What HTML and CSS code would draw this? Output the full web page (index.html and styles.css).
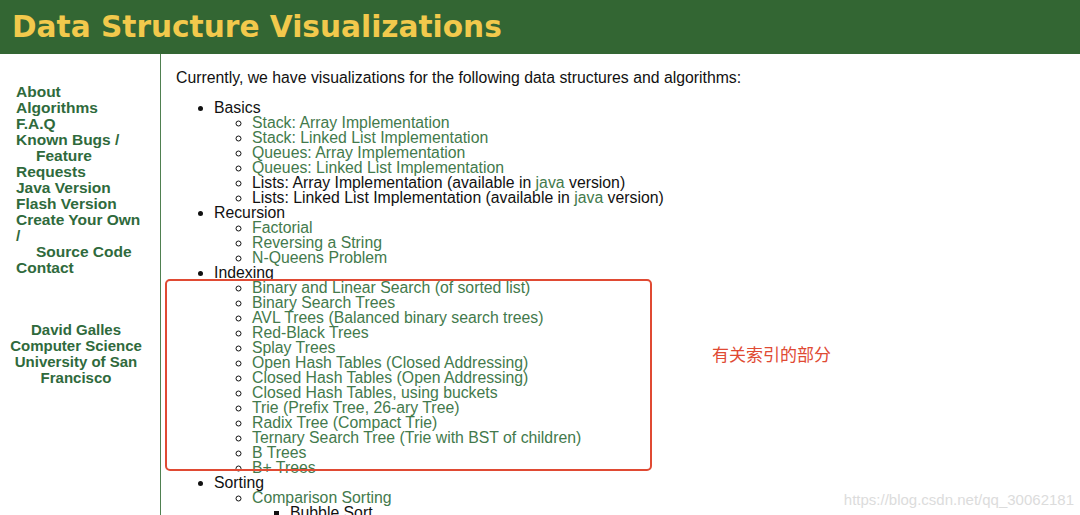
FILE: index.html
```html
<!DOCTYPE html>
<html>
<head>
<meta charset="utf-8">
<title>Data Structure Visualizations</title>
<link rel="stylesheet" href="styles.css">
</head>
<body>
<header class="header">
  <h1 class="title">Data Structure Visualizations</h1>
</header>
<div class="layout">
  <nav class="sidebar">
    <div class="menu">
      <a class="nav-link">About</a>
      <a class="nav-link">Algorithms</a>
      <a class="nav-link">F.A.Q</a>
      <a class="nav-link">Known Bugs /</a>
      <a class="nav-link indent">Feature</a>
      <a class="nav-link">Requests</a>
      <a class="nav-link">Java Version</a>
      <a class="nav-link">Flash Version</a>
      <a class="nav-link">Create Your Own</a>
      <a class="nav-link">/</a>
      <a class="nav-link indent">Source Code</a>
      <a class="nav-link">Contact</a>
    </div>
    <div class="credits">
      <div>David Galles</div>
      <div>Computer Science</div>
      <div>University of San</div>
      <div>Francisco</div>
    </div>
  </nav>
  <main class="main">
    <p class="intro">Currently, we have visualizations for the following data structures and algorithms:</p>
    <ul class="list">
      <li>Basics
        <ul class="sub">
          <li><a class="link">Stack: Array Implementation</a></li>
          <li><a class="link">Stack: Linked List Implementation</a></li>
          <li><a class="link">Queues: Array Implementation</a></li>
          <li><a class="link">Queues: Linked List Implementation</a></li>
          <li>Lists: Array Implementation (available in <a class="link">java</a> version)</li>
          <li>Lists: Linked List Implementation (available in <a class="link">java</a> version)</li>
        </ul>
      </li>
      <li>Recursion
        <ul class="sub">
          <li><a class="link">Factorial</a></li>
          <li><a class="link">Reversing a String</a></li>
          <li><a class="link">N-Queens Problem</a></li>
        </ul>
      </li>
      <li>Indexing
        <ul class="sub">
          <li><a class="link">Binary and Linear Search (of sorted list)</a></li>
          <li><a class="link">Binary Search Trees</a></li>
          <li><a class="link">AVL Trees (Balanced binary search trees)</a></li>
          <li><a class="link">Red-Black Trees</a></li>
          <li><a class="link">Splay Trees</a></li>
          <li><a class="link">Open Hash Tables (Closed Addressing)</a></li>
          <li><a class="link">Closed Hash Tables (Open Addressing)</a></li>
          <li><a class="link">Closed Hash Tables, using buckets</a></li>
          <li><a class="link">Trie (Prefix Tree, 26-ary Tree)</a></li>
          <li><a class="link">Radix Tree (Compact Trie)</a></li>
          <li><a class="link">Ternary Search Tree (Trie with BST of children)</a></li>
          <li><a class="link">B Trees</a></li>
          <li><a class="link">B+ Trees</a></li>
        </ul>
      </li>
      <li>Sorting
        <ul class="sub">
          <li><a class="link">Comparison Sorting</a>
            <ul class="subsub">
              <li>Bubble Sort</li>
              <li>Selection Sort</li>
            </ul>
          </li>
        </ul>
      </li>
    </ul>
    <div class="highlight-box"></div>
    <div class="annotation">有关索引的部分</div>
  </main>
</div>
<div class="watermark">https://blog.csdn.net/qq_30062181</div>
</body>
</html>
```

FILE: styles.css
```css
html, body {
  margin: 0;
  padding: 0;
  background: #ffffff;
  overflow: hidden;
  height: 515px;
}

body {
  font-family: "Liberation Sans", Arial, sans-serif;
  font-size: 15.8px;
  line-height: 15px;
  color: #111111;
  position: relative;
}

.header {
  background: #336633;
  height: 54px;
  box-sizing: border-box;
  padding: 10px 0 0 12px;
}

.title {
  margin: 0;
  font-family: "DejaVu Sans", Verdana, sans-serif;
  font-weight: bold;
  font-size: 29.6px;
  line-height: 34px;
  color: #f2c94c;
}

.layout {
  display: flex;
  height: 461px;
}

.sidebar {
  width: 161px;
  flex: 0 0 161px;
  border-right: 1px solid #4f8050;
  padding-top: 30px;
  box-sizing: border-box;
  font-weight: bold;
  font-size: 15.5px;
  line-height: 16px;
  color: #2f6a3c;
}

.menu {
  display: flex;
  flex-direction: column;
  padding-left: 16px;
}

.nav-link {
  display: block;
  color: #2f6a3c;
}

.nav-link.indent {
  padding-left: 20px;
}

.credits {
  margin-top: 46px;
  width: 152px;
  text-align: center;
  font-size: 15px;
}

.main {
  position: relative;
  flex: 1;
  padding: 16px 0 0 15px;
}

.intro {
  margin: 0 0 15px 0;
}

.list,
.sub,
.subsub {
  margin: 0;
}

.list {
  list-style: disc;
  padding-left: 38px;
}

.sub {
  list-style: circle;
  padding-left: 38px;
}

.subsub {
  list-style: square;
  padding-left: 38px;
}

.link {
  color: #437a4c;
}

.highlight-box {
  position: absolute;
  left: 4px;
  top: 225px;
  width: 487px;
  height: 192px;
  box-sizing: border-box;
  border: 2px solid #e04a33;
  border-radius: 5px;
}

.annotation {
  position: absolute;
  left: 551px;
  top: 290px;
  font-family: "Noto Sans CJK SC", sans-serif;
  font-size: 17px;
  line-height: 20px;
  color: #e04a33;
}

.watermark {
  position: absolute;
  right: 6px;
  bottom: 8px;
  font-family: "Liberation Sans", Arial, sans-serif;
  font-size: 15px;
  color: #dcdcdc;
}
```
